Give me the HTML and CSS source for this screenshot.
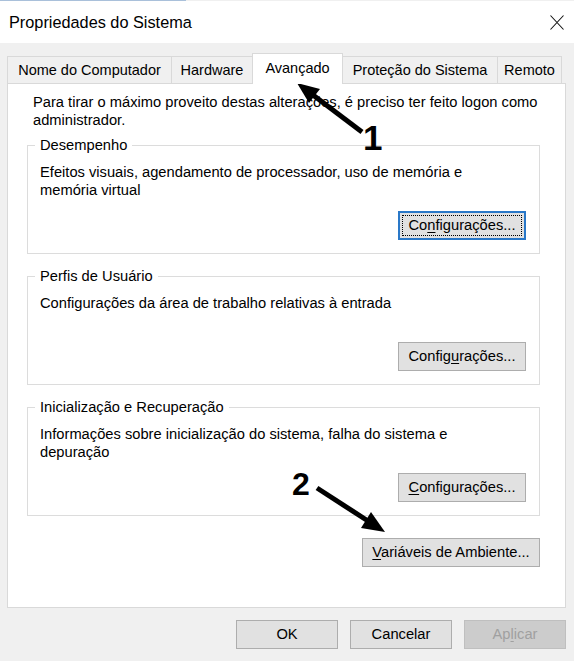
FILE: index.html
```html
<!DOCTYPE html>
<html lang="pt">
<head>
<meta charset="utf-8">
<title>Propriedades do Sistema</title>
<link rel="stylesheet" href="styles.css">
</head>
<body>
<div class="window">
  <div class="edge"></div>
  <div class="titlebar">
    <span class="title">Propriedades do Sistema</span>
    <svg class="close" width="14" height="15" viewBox="0 0 14 15"><path d="M0.5 0.5 L13.5 14.5 M13.5 0.5 L0.5 14.5" stroke="#111" stroke-width="1.1" fill="none"/></svg>
  </div>
  <div class="content">
    <div class="tabs">
      <div class="tab t1">Nome do Computador</div>
      <div class="tab t2">Hardware</div>
      <div class="tab t3 selected">Avançado</div>
      <div class="tab t4">Proteção do Sistema</div>
      <div class="tab t5">Remoto</div>
    </div>
    <div class="panel">
      <p class="intro">Para tirar o máximo proveito destas alterações, é preciso ter feito logon como administrador.</p>
      <fieldset class="group">
        <legend>Desempenho</legend>
        <p class="desc">Efeitos visuais, agendamento de processador, uso de memória e memória virtual</p>
        <div class="grouprow"><button class="btn cfg focused">Co<u>n</u>figurações...</button></div>
      </fieldset>
      <fieldset class="group">
        <legend>Perfis de Usuário</legend>
        <p class="desc">Configurações da área de trabalho relativas à entrada</p>
        <div class="grouprow"><button class="btn cfg">Config<u>u</u>rações...</button></div>
      </fieldset>
      <fieldset class="group">
        <legend>Inicialização e Recuperação</legend>
        <p class="desc">Informações sobre inicialização do sistema, falha do sistema e depuração</p>
        <div class="grouprow"><button class="btn cfg"><u>C</u>onfigurações...</button></div>
      </fieldset>
      <div class="envrow"><button class="btn env"><u>V</u>ariáveis de Ambiente...</button></div>
    </div>
    <div class="footer">
      <button class="btn dlg">OK</button>
      <button class="btn dlg">Cancelar</button>
      <button class="btn dlg disabled">Ap<u>l</u>icar</button>
    </div>
  </div>
  <svg class="annot" width="574" height="661" viewBox="0 0 574 661">
    <line x1="362" y1="132" x2="313" y2="95" stroke="#000" stroke-width="5"/>
    <polygon points="297,83 320,89 309,103" fill="#000"/>
    <text x="363" y="150" class="num">1</text>
    <line x1="317" y1="488" x2="368" y2="521" stroke="#000" stroke-width="5"/>
    <polygon points="385,532 361,528 371,512" fill="#000"/>
    <text x="292" y="495" class="num num2">2</text>
  </svg>
</div>
</body>
</html>
```

FILE: styles.css
```css
* { box-sizing: border-box; }
html, body { margin: 0; padding: 0; }
body {
  font-family: "Liberation Sans", Arial, sans-serif;
  font-size: 14.7px;
  color: #000;
  background: #f0f0f0;
}
.window {
  position: relative;
  width: 574px;
  height: 661px;
  background: #f0f0f0;
  overflow: hidden;
}
.edge {
  width: 186px;
  height: 1px;
  background: #a9c0da;
}
.titlebar {
  height: 42px;
  background: #fff;
  display: flex;
  align-items: center;
  justify-content: space-between;
  padding: 0 10px 0 9px;
}
.title {
  font-size: 16.3px;
  line-height: 20px;
}
.close { display: block; }

.content { padding-top: 13px; }

.tabs {
  display: flex;
  align-items: flex-end;
  height: 27px;
  margin-left: 7px;
}
.tab {
  height: 27px;
  line-height: 26px;
  text-align: center;
  border: 1px solid #d9d9d9;
  border-bottom: none;
  border-right: none;
  background: #f0f0f0;
  white-space: nowrap;
  font-size: 14.5px;
}
.t1 { width: 164px; }
.t2 { width: 81px; }
.t3 { width: 91px; }
.t4 { width: 154px; }
.t5 { width: 65px; border-right: 1px solid #d9d9d9; }
.tab.selected {
  position: relative;
  z-index: 1;
  height: 31px;
  line-height: 29px;
  margin-bottom: -1px;
  background: #fff;
  border-right: 1px solid #d9d9d9;
}
.tab.selected + .tab { border-left: none; }

.panel {
  margin-left: 7px;
  width: 559px;
  height: 525px;
  background: #fff;
  border: 1px solid #d9d9d9;
  padding: 9px 25px 0 19px;
}
.intro {
  margin: 0;
  padding-left: 6px;
  line-height: 18px;
}
.group {
  margin: 13px 0 0 0;
  border: 1px solid #dcdcdc;
  padding: 9px 13px 13px 7px;
  min-width: 0;
}
.intro + .group { margin-top: 7px; }
.group legend {
  padding: 0 5px;
  line-height: 18px;
}
.desc {
  margin: 0;
  padding-left: 5px;
  max-width: 440px;
  line-height: 18px;
  min-height: 36px;
}
.grouprow {
  display: flex;
  justify-content: flex-end;
  margin-top: 12px;
}
.btn {
  font-family: "Liberation Sans", Arial, sans-serif;
  font-size: 14.7px;
  color: #000;
  height: 29px;
  background: #e1e1e1;
  border: 1px solid #adadad;
  padding: 0;
  margin: 0;
  line-height: 27px;
}
.btn u { text-decoration: underline; text-underline-offset: 2px; }
.cfg { width: 128px; }
.focused {
  border: 2px solid #2a78c8;
  outline: 1px dotted #000;
  outline-offset: -5px;
  line-height: 25px;
}
.envrow {
  display: flex;
  justify-content: flex-end;
  margin-top: 22px;
}
.env { width: 178px; }
.footer {
  display: flex;
  justify-content: flex-end;
  gap: 12px;
  padding-right: 8px;
  margin-top: 12px;
}
.dlg { width: 102px; }
.disabled {
  background: #cccccc;
  border-color: #bfbfbf;
  color: #a0a0a0;
}
.annot {
  position: absolute;
  left: 0;
  top: 0;
  pointer-events: none;
}
.num {
  font-family: "Liberation Sans", Arial, sans-serif;
  font-weight: bold;
  font-size: 35px;
  fill: #000;
}
.num2 { font-size: 32px; }
```
